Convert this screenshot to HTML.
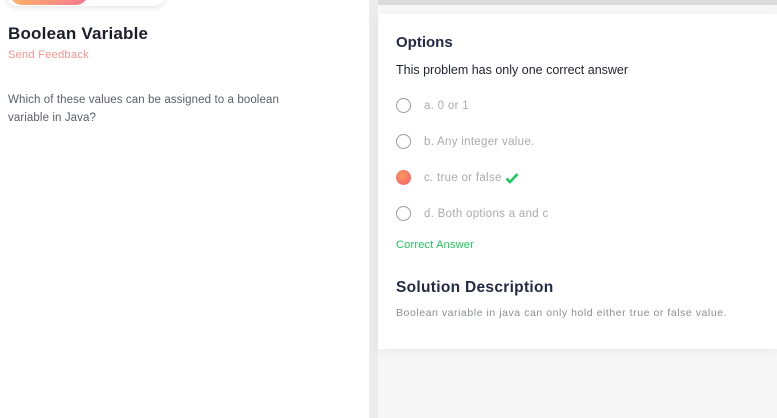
<!DOCTYPE html>
<html><head><style>
*{margin:0;padding:0;box-sizing:border-box}
body{width:777px;height:418px;overflow:hidden;background:#f7f7f7;font-family:"Liberation Sans",sans-serif;position:relative}
.left{position:absolute;left:0;top:0;width:369px;height:418px;background:#fff}
.gap{position:absolute;left:369px;top:0;width:9px;height:418px;background:#ececec}
.tab{position:absolute;left:6px;top:-20px;width:160px;height:26px;background:#fff;border-radius:12px;box-shadow:0 2px 6px rgba(0,0,0,.1)}
.pill{position:absolute;left:10px;top:-20px;width:78px;height:25px;border-radius:12px;background:linear-gradient(90deg,#fbb36a,#f7798f)}
.h1{position:absolute;left:8px;top:24px;font-size:17px;font-weight:bold;color:#1b1f2b;letter-spacing:.2px}
.fb{position:absolute;left:8px;top:49px;font-size:11px;color:#f8928f;letter-spacing:.3px}
.q{position:absolute;left:8px;top:91px;font-size:11.5px;line-height:18px;color:#5b5e6a;width:300px;letter-spacing:.1px}
.topbar{position:absolute;left:378px;top:0;right:0;height:5px;background:#dcdcdc}
.card{position:absolute;left:378px;top:14px;right:0;height:335px;background:#fff;box-shadow:0 4px 10px rgba(0,0,0,.05)}
.t{position:absolute;left:18px;font-weight:bold;color:#232a45}
.o{position:absolute;left:18px;font-size:11.5px;color:#aaa;display:flex;align-items:center;letter-spacing:.3px}
.r{width:15px;height:15px;border:1.3px solid #999;border-radius:50%;margin-right:13px}
</style></head><body>
<div class="left">
<div class="tab"></div><div class="pill"></div>
<div class="h1">Boolean Variable</div>
<div class="fb">Send Feedback</div>
<div class="q">Which of these values can be assigned to a boolean variable in Java?</div>
</div>
<div class="gap"></div>
<div class="topbar"></div>
<div class="card">
<div class="t" style="top:20px;font-size:15px">Options</div>
<div style="position:absolute;left:18px;top:49px;font-size:12.5px;color:#1f2230">This problem has only one correct answer</div>
<div class="o" style="top:84px"><span class="r"></span>a. 0 or 1</div>
<div class="o" style="top:120px"><span class="r"></span>b. Any integer value.</div>
<div class="o" style="top:156px"><span class="r" style="border:none;background:radial-gradient(circle at 40% 35%,#f89a5e,#f5576c)"></span>c. true or false&nbsp;<svg width="14" height="12" viewBox="0 0 14 12"><path d="M1.5 6.5l3.5 3.5 7.5-8" fill="none" stroke="#1ec95c" stroke-width="2.6"/></svg></div>
<div class="o" style="top:192px"><span class="r"></span>d. Both options a and c</div>
<div style="position:absolute;left:18px;top:225px;font-size:11px;color:#1ec95c;letter-spacing:.2px">Correct Answer</div>
<div class="t" style="top:265px;font-size:15.5px;letter-spacing:.3px">Solution Description</div>
<div style="position:absolute;left:18px;top:293px;font-size:10.5px;color:#8a8d96;letter-spacing:.55px">Boolean variable in java can only hold either true or false value.</div>
</div>
</body></html>
